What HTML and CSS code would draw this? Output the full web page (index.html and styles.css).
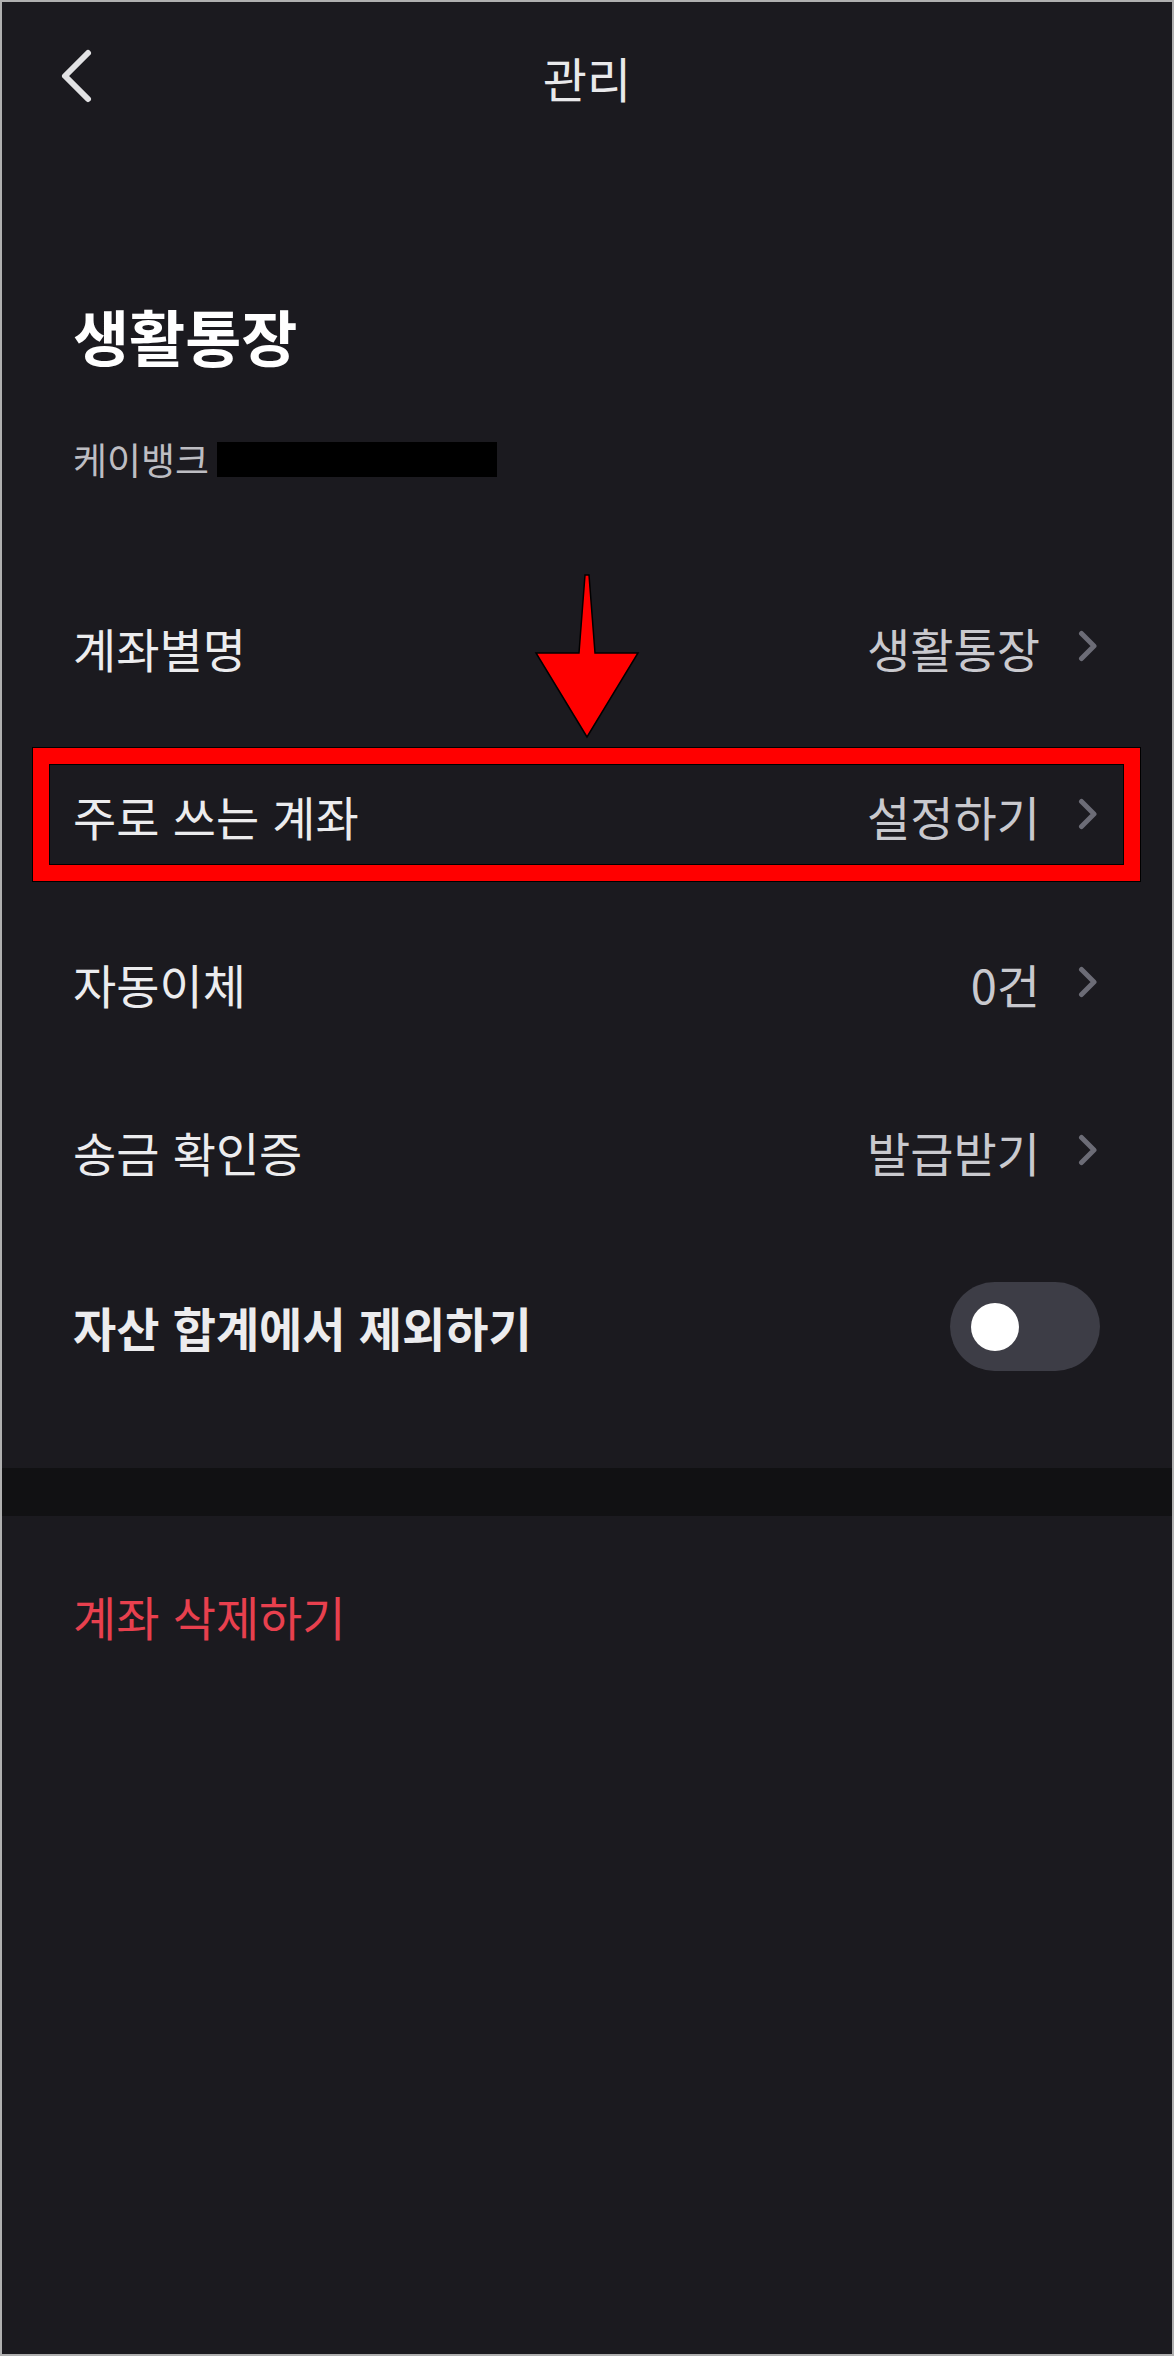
FILE: index.html
```html
<!DOCTYPE html>
<html lang="ko">
<head>
<meta charset="utf-8">
<title>관리</title>
<link rel="stylesheet" href="styles.css">
</head>
<body>
<div class="screen">
  <header class="topbar">
    <div class="topbar-left">
      <svg class="back" width="36" height="60" viewBox="0 0 36 60" aria-hidden="true">
        <path d="M30 6 L7 29 L30 52" fill="none" stroke="#e2e2e4" stroke-width="6" stroke-linecap="round" stroke-linejoin="round"/>
      </svg>
    </div>
    <h1 class="topbar-title">관리</h1>
    <div class="topbar-right"></div>
  </header>

  <section class="account">
    <h2 class="account-name">생활통장</h2>
    <div class="account-bank">
      <span class="bank-name">케이뱅크</span>
      <span class="redacted"></span>
    </div>
  </section>

  <section class="settings">
    <div class="row">
      <span class="row-label">계좌별명</span>
      <span class="row-value">생활통장</span>
      <svg class="chev" width="20" height="32" viewBox="0 0 20 32" aria-hidden="true"><path d="M3.5 3.5 L16 16 L3.5 28.5" fill="none" stroke="#6c6c76" stroke-width="5" stroke-linecap="round" stroke-linejoin="round"/></svg>
    </div>
    <div class="row">
      <span class="row-label">주로 쓰는 계좌</span>
      <span class="row-value">설정하기</span>
      <svg class="chev" width="20" height="32" viewBox="0 0 20 32" aria-hidden="true"><path d="M3.5 3.5 L16 16 L3.5 28.5" fill="none" stroke="#6c6c76" stroke-width="5" stroke-linecap="round" stroke-linejoin="round"/></svg>
    </div>
    <div class="row">
      <span class="row-label">자동이체</span>
      <span class="row-value">0건</span>
      <svg class="chev" width="20" height="32" viewBox="0 0 20 32" aria-hidden="true"><path d="M3.5 3.5 L16 16 L3.5 28.5" fill="none" stroke="#6c6c76" stroke-width="5" stroke-linecap="round" stroke-linejoin="round"/></svg>
    </div>
    <div class="row">
      <span class="row-label">송금 확인증</span>
      <span class="row-value">발급받기</span>
      <svg class="chev" width="20" height="32" viewBox="0 0 20 32" aria-hidden="true"><path d="M3.5 3.5 L16 16 L3.5 28.5" fill="none" stroke="#6c6c76" stroke-width="5" stroke-linecap="round" stroke-linejoin="round"/></svg>
    </div>
    <div class="row row-toggle">
      <span class="row-label strong">자산 합계에서 제외하기</span>
      <span class="toggle"><span class="knob"></span></span>
    </div>
  </section>

  <div class="divider"></div>

  <section class="danger">
    <span class="delete">계좌 삭제하기</span>
  </section>

  <div class="highlight"></div>
  <svg class="pointer" width="115" height="175" viewBox="0 0 115 175" aria-hidden="true">
    <polygon points="55,5 59,5 65,83 108,83 57,167 6,83 49,83" fill="#ff0000" stroke="#000" stroke-width="1.5" stroke-linejoin="miter"/>
  </svg>
</div>
</body>
</html>
```

FILE: styles.css
```css
* { box-sizing: border-box; }

html, body {
  margin: 0;
  padding: 0;
  background: #1b1a1f;
}

body {
  font-family: "Noto Sans CJK KR", "Noto Sans", sans-serif;
}

.screen {
  position: relative;
  width: 1174px;
  height: 2356px;
  border: 2px solid #b0b0b0;
  background: #1b1a1f;
  overflow: hidden;
}

/* header */
.topbar {
  height: 150px;
  display: grid;
  grid-template-columns: 1fr auto 1fr;
  align-items: center;
}

.topbar-left {
  display: flex;
  align-items: center;
  padding-left: 56px;
}

.back { display: block; }

.topbar-title {
  margin: 0;
  font-size: 48px;
  font-weight: 400;
  line-height: 60px;
  color: #e9e9eb;
}

/* account heading */
.account {
  padding: 148px 71px 0;
}

.account-name {
  margin: 0;
  font-size: 61px;
  font-weight: 700;
  line-height: 72px;
  color: #ffffff;
}

.account-bank {
  margin-top: 65px;
  height: 44px;
  display: flex;
  align-items: center;
  gap: 8px;
}

.bank-name {
  font-size: 37px;
  line-height: 44px;
  color: #bdbdc2;
}

.redacted {
  display: block;
  width: 280px;
  height: 35px;
  background: #000;
}

/* settings list */
.settings {
  margin-top: 83px;
  padding-bottom: 51px;
}

.row {
  height: 168px;
  display: flex;
  align-items: center;
  padding: 0 74px 0 71px;
}

.row-toggle {
  height: 181px;
  padding-right: 72px;
}

.row-label {
  flex: 1;
  font-size: 47px;
  line-height: 60px;
  color: #ececee;
}

.row-label.strong {
  font-weight: 700;
}

.row-value {
  font-size: 47px;
  line-height: 60px;
  color: #c9c9ce;
  margin-right: 38px;
}

.chev {
  display: block;
  margin-top: -4px;
}

.toggle {
  display: flex;
  align-items: center;
  width: 150px;
  height: 89px;
  border-radius: 44.5px;
  background: #3d3d46;
  padding-left: 21px;
}

.knob {
  display: block;
  width: 48px;
  height: 48px;
  border-radius: 50%;
  background: #ffffff;
}

.divider {
  height: 48px;
  background: #111113;
}

.danger {
  padding: 70px 71px 0;
}

.delete {
  display: block;
  font-size: 47px;
  line-height: 60px;
  color: #e8404e;
}

/* annotation overlay */
.highlight {
  position: absolute;
  left: 31px;
  top: 746px;
  width: 1107px;
  height: 133px;
  border: 16px solid #ff0000;
  outline: 1px solid #000;
  box-shadow: inset 0 0 0 1px #000;
}

.pointer {
  position: absolute;
  left: 528px;
  top: 568px;
}
```
